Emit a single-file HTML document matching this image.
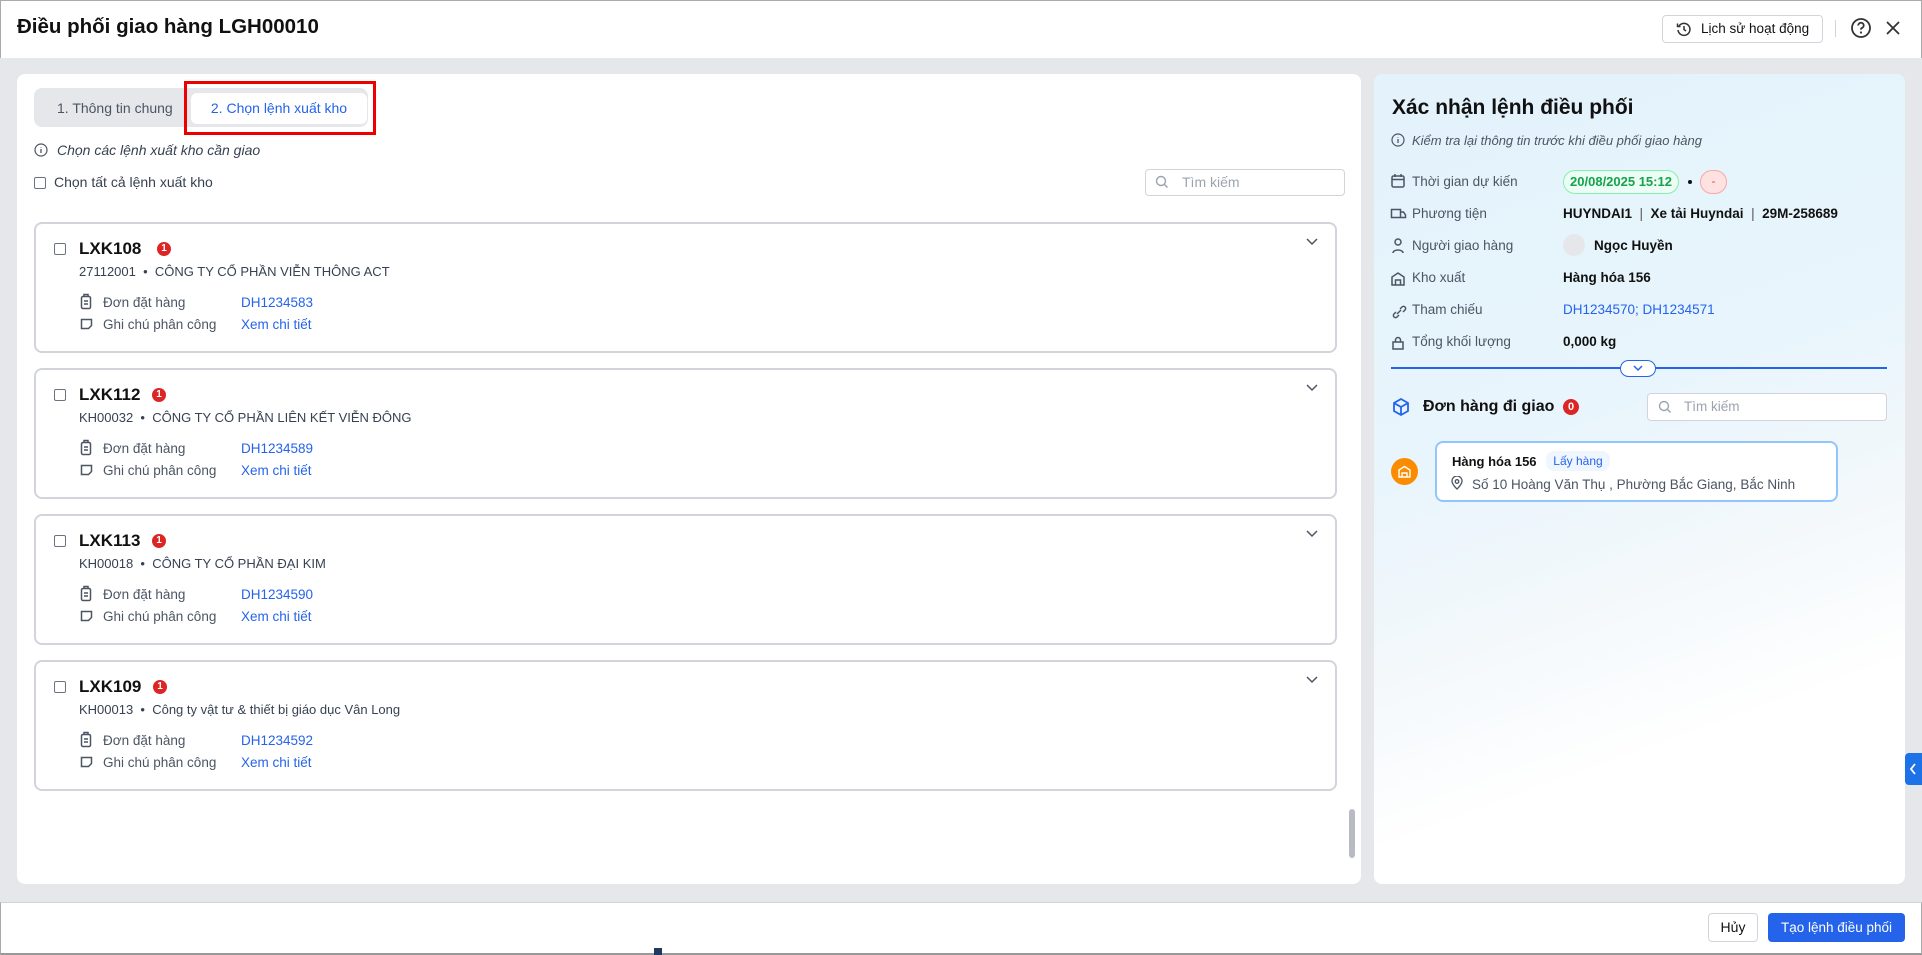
<!DOCTYPE html>
<html><head><meta charset="utf-8"><style>
*{box-sizing:border-box;margin:0;padding:0}
body{width:1922px;height:955px;overflow:hidden;background:#e5e7eb;font-family:"Liberation Sans","Noto Sans CJK SC",sans-serif;color:#1f2937;position:relative;font-size:14px}
.a{position:absolute}
.hdr{left:0;top:0;width:1922px;height:58px;background:#fff;border-top:1px solid #aaa;border-left:1px solid #aaa;border-right:1px solid #aaa}
.ftr{left:0;top:902px;width:1922px;height:53px;background:#fff;border-top:1px solid #d1d5db;border-left:1px solid #aaa;border-right:1px solid #aaa;border-bottom:2px solid #999}
.panel{background:#fff;border-radius:8px}
.card{left:34px;width:1303px;height:131px;border:2px solid #d1d5db;border-radius:8px;background:#fff}
.cb{width:12px;height:12px;border:1px solid #6b7280;border-radius:2px;background:#fff}
.lbl{color:#4b5563;font-size:13.5px}
.lnk{color:#2563eb;font-size:13.5px}
.sub{left:79px;font-size:13px;color:#374151}
.badge{width:14px;height:14px;border-radius:50%;background:#dc2626;color:#fff;font-size:10px;font-weight:bold;text-align:center;line-height:14px}
.rl{left:1412px;color:#4b5563;font-size:13.5px;line-height:16px}
.rv{left:1563px;font-weight:bold;font-size:13.5px;line-height:16px;color:#111}
.ic{stroke:#4b5563;fill:none;stroke-width:1.5}
</style></head><body>
<div class="a hdr"></div>
<div class="a" style="left:17px;top:15px;font-size:20.5px;font-weight:600;color:#111">Điều phối giao hàng LGH00010</div>
<div class="a" style="left:1662px;top:15px;width:161px;height:28px;border:1px solid #d1d5db;border-radius:4px;font-size:13.5px;line-height:26px;padding-left:38px;color:#111">Lịch sử hoạt động</div>
<svg class="a" style="left:1676px;top:21px" width="16" height="16" viewBox="0 0 16 16"><path d="M3 5a6 6 0 1 1-1 4" stroke="#333" stroke-width="1.5" fill="none"/><path d="M1.5 2.5v3h3" stroke="#333" stroke-width="1.5" fill="none"/><path d="M8 5v3.5l2 1.5" stroke="#333" stroke-width="1.5" fill="none"/></svg>
<div class="a" style="left:1835px;top:20px;width:1px;height:17px;background:#d1d5db"></div>
<svg class="a" style="left:1850px;top:17px" width="22" height="22" viewBox="0 0 22 22"><circle cx="11" cy="11" r="9" stroke="#333" stroke-width="1.8" fill="none"/><path d="M8.3 8.5a2.7 2.7 0 1 1 3.6 2.5c-.7.3-.9.8-.9 1.6" stroke="#333" stroke-width="1.8" fill="none"/><circle cx="11" cy="15.5" r="1.1" fill="#333"/></svg>
<svg class="a" style="left:1885px;top:20px" width="16" height="16" viewBox="0 0 16 16"><path d="M2 2l12 12M14 2L2 14" stroke="#333" stroke-width="1.8"/></svg>

<div class="a panel" style="left:17px;top:74px;width:1344px;height:810px"></div>
<div class="a" style="left:34px;top:88px;width:334px;height:39px;background:#e5e7eb;border-radius:8px"></div>
<div class="a" style="left:57px;top:100px;font-size:14px;color:#4b5563">1. Thông tin chung</div>
<div class="a" style="left:191px;top:93px;width:176px;height:31px;background:#fff;border-radius:6px;color:#2563eb;font-size:14px;line-height:31px;text-align:center">2. Chọn lệnh xuất kho</div>
<div class="a" style="left:184px;top:81px;width:192px;height:54px;border:3px solid #e00"></div>
<svg class="a" style="left:34px;top:143px" width="14" height="14" viewBox="0 0 14 14"><circle cx="7" cy="7" r="6" stroke="#4b5563" stroke-width="1.2" fill="none"/><path d="M7 6v4M7 4v.5" stroke="#4b5563" stroke-width="1.3"/></svg>
<div class="a" style="left:57px;top:142px;font-size:14px;font-style:italic;color:#374151">Chọn các lệnh xuất kho cần giao</div>
<div class="a cb" style="left:34px;top:177px"></div>
<div class="a" style="left:54px;top:174px;font-size:14px;color:#374151">Chọn tất cả lệnh xuất kho</div>
<div class="a" style="left:1145px;top:169px;width:200px;height:27px;border:1px solid #d1d5db;border-radius:4px;color:#9ca3af;font-size:14px;line-height:25px;padding-left:36px">Tìm kiếm</div>
<svg class="a" style="left:1155px;top:175px" width="14" height="14" viewBox="0 0 14 14"><circle cx="6" cy="6" r="4.5" stroke="#9ca3af" stroke-width="1.4" fill="none"/><path d="M9.5 9.5l3 3" stroke="#9ca3af" stroke-width="1.4"/></svg>

<div class="a card" style="top:222px"></div>
<div class="a card" style="top:368px"></div>
<div class="a card" style="top:514px"></div>
<div class="a card" style="top:660px"></div>

<div class="a cb" style="left:54px;top:243px"></div><div class="a" style="left:79px;top:239px;font-size:17px;font-weight:bold;color:#111">LXK108</div><div class="a badge" style="left:157px;top:242px">1</div>
<div class="a sub" style="top:264px">27112001 &nbsp;•&nbsp; CÔNG TY CỔ PHẦN VIỄN THÔNG ACT</div>
<div class="a lbl" style="left:103px;top:295px">Đơn đặt hàng</div><div class="a lnk" style="left:241px;top:295px">DH1234583</div>
<div class="a lbl" style="left:103px;top:317px">Ghi chú phân công</div><div class="a lnk" style="left:241px;top:317px">Xem chi tiết</div>

<div class="a cb" style="left:54px;top:389px"></div><div class="a" style="left:79px;top:385px;font-size:17px;font-weight:bold;color:#111">LXK112</div><div class="a badge" style="left:152px;top:388px">1</div>
<div class="a sub" style="top:410px">KH00032 &nbsp;•&nbsp; CÔNG TY CỔ PHẦN LIÊN KẾT VIỄN ĐÔNG</div>
<div class="a lbl" style="left:103px;top:441px">Đơn đặt hàng</div><div class="a lnk" style="left:241px;top:441px">DH1234589</div>
<div class="a lbl" style="left:103px;top:463px">Ghi chú phân công</div><div class="a lnk" style="left:241px;top:463px">Xem chi tiết</div>

<div class="a cb" style="left:54px;top:535px"></div><div class="a" style="left:79px;top:531px;font-size:17px;font-weight:bold;color:#111">LXK113</div><div class="a badge" style="left:152px;top:534px">1</div>
<div class="a sub" style="top:556px">KH00018 &nbsp;•&nbsp; CÔNG TY CỔ PHẦN ĐẠI KIM</div>
<div class="a lbl" style="left:103px;top:587px">Đơn đặt hàng</div><div class="a lnk" style="left:241px;top:587px">DH1234590</div>
<div class="a lbl" style="left:103px;top:609px">Ghi chú phân công</div><div class="a lnk" style="left:241px;top:609px">Xem chi tiết</div>

<div class="a cb" style="left:54px;top:681px"></div><div class="a" style="left:79px;top:677px;font-size:17px;font-weight:bold;color:#111">LXK109</div><div class="a badge" style="left:153px;top:680px">1</div>
<div class="a sub" style="top:702px">KH00013 &nbsp;•&nbsp; Công ty vật tư &amp; thiết bị giáo dục Vân Long</div>
<div class="a lbl" style="left:103px;top:733px">Đơn đặt hàng</div><div class="a lnk" style="left:241px;top:733px">DH1234592</div>
<div class="a lbl" style="left:103px;top:755px">Ghi chú phân công</div><div class="a lnk" style="left:241px;top:755px">Xem chi tiết</div>

<svg class="a" style="left:0;top:0" width="1361" height="884">
<g id="ci">
<rect x="81.5" y="296.5" width="9" height="12" rx="1.5" class="ic" stroke-width="1.3"/><path d="M84 296v-1.5h4v1.5M84 301h4M84 304h4" class="ic" stroke-width="1.3"/>
<path d="M81.5 319.5h10v6l-3 3h-7z" class="ic" stroke-width="1.3"/>
<path d="M1307 239l5 5 5-5" class="ic" stroke-width="1.4"/>
</g>
<use href="#ci" y="146"/><use href="#ci" y="292"/><use href="#ci" y="438"/>
</svg>
<div class="a" style="left:1349px;top:809px;width:6px;height:49px;background:#b8bcc2;border-radius:3px"></div>

<div class="a panel" style="left:1374px;top:74px;width:531px;height:810px;background:linear-gradient(160deg,#e3f2fb 0%,#e8f5fc 40%,#f3f8fb 60%,#fff 78%)"></div>
<div class="a" style="left:1392px;top:96px;font-size:21px;font-weight:600;color:#111">Xác nhận lệnh điều phối</div>
<svg class="a" style="left:1391px;top:133px" width="14" height="14" viewBox="0 0 14 14"><circle cx="7" cy="7" r="6" stroke="#4b5563" stroke-width="1.2" fill="none"/><path d="M7 6v4M7 4v.5" stroke="#4b5563" stroke-width="1.3"/></svg>
<div class="a" style="left:1412px;top:133px;font-size:13px;font-style:italic;color:#4b5563">Kiểm tra lại thông tin trước khi điều phối giao hàng</div>

<div class="a rl" style="top:174px">Thời gian dự kiến</div>
<div class="a rl" style="top:206px">Phương tiện</div>
<div class="a rl" style="top:238px">Người giao hàng</div>
<div class="a rl" style="top:270px">Kho xuất</div>
<div class="a rl" style="top:302px">Tham chiếu</div>
<div class="a rl" style="top:334px">Tổng khối lượng</div>
<svg class="a" style="left:1390px;top:170px" width="18" height="190">
<rect x="2" y="6" width="12" height="11" rx="1.5" class="ic" stroke-width="1.3"/><path d="M2 9.5h12M5 4v3M11 4v3" class="ic" stroke-width="1.3"/>
<path d="M1.5 39.5h9v8h-9zM10.5 42h3l2 3v2.5h-5" class="ic" stroke-width="1.3"/>
<circle cx="8" cy="72" r="3" class="ic" stroke-width="1.3"/><path d="M3 83c0-4 10-4 10 0" class="ic" stroke-width="1.3"/>
<path d="M2 115v-8l6-4 6 4v8zM5.5 115v-5h5v5" class="ic" stroke-width="1.3"/>
<path d="M6 142l-2 2a2 2 0 0 0 3 3l2-2M10 139l2-2a2 2 0 0 1 3 3l-2 2M7 144l4-4" class="ic" stroke-width="1.3"/>
<path d="M3 179v-7h10v7zM5.5 172v-2a2.5 2.5 0 0 1 5 0v2" class="ic" stroke-width="1.3"/>
</svg>
<div class="a" style="left:1563px;top:170px;width:116px;height:24px;border:1px solid #86efac;background:#ecfdf5;border-radius:12px;color:#16a34a;font-weight:600;font-size:13px;line-height:22px;text-align:center">20/08/2025 15:12</div>
<div class="a" style="left:1688px;top:180px;width:4px;height:4px;border-radius:2px;background:#111"></div>
<div class="a" style="left:1700px;top:170px;width:27px;height:24px;border:1px solid #fca5a5;background:#fee2e2;border-radius:12px;color:#ef4444;font-size:12px;line-height:21px;text-align:center">-</div>
<div class="a rv" style="top:206px">HUYNDAI1 <span style="color:#555;font-weight:normal">&nbsp;|&nbsp;</span> Xe tải Huyndai <span style="color:#555;font-weight:normal">&nbsp;|&nbsp;</span> 29M-258689</div>
<div class="a" style="left:1563px;top:234px;width:22px;height:22px;border-radius:50%;background:#e5e7eb"></div>
<div class="a rv" style="left:1594px;top:238px">Ngọc Huyền</div>
<div class="a rv" style="top:270px">Hàng hóa 156</div>
<div class="a rv" style="top:302px;color:#2563eb;font-weight:normal">DH1234570; DH1234571</div>
<div class="a rv" style="top:334px">0,000 kg</div>
<div class="a" style="left:1391px;top:367px;width:496px;height:1.5px;background:#2563eb"></div>
<div class="a" style="left:1620px;top:360px;width:36px;height:17px;border:1.5px solid #2563eb;border-radius:9px;background:#fff"></div>
<svg class="a" style="left:1632px;top:364px" width="12" height="8"><path d="M2 2l4 4 4-4" stroke="#2563eb" stroke-width="1.5" fill="none"/></svg>
<svg class="a" style="left:1391px;top:397px" width="20" height="20" viewBox="0 0 20 20"><path d="M10 2l7 4v8l-7 4-7-4V6zM3 6l7 4 7-4M10 10v8" stroke="#2563eb" stroke-width="1.8" fill="none"/></svg>
<div class="a" style="left:1423px;top:398px;font-size:16px;font-weight:600;color:#111">Đơn hàng đi giao</div>
<div class="a" style="left:1563px;top:399px;width:16px;height:16px;border-radius:50%;background:#dc2626;color:#fff;font-size:11px;font-weight:bold;text-align:center;line-height:16px">0</div>
<div class="a" style="left:1647px;top:393px;width:240px;height:28px;border:1px solid #d1d5db;border-radius:4px;background:#fff;color:#9ca3af;font-size:13.5px;line-height:26px;padding-left:36px">Tìm kiếm</div>
<svg class="a" style="left:1658px;top:400px" width="14" height="14" viewBox="0 0 14 14"><circle cx="6" cy="6" r="4.5" stroke="#9ca3af" stroke-width="1.4" fill="none"/><path d="M9.5 9.5l3 3" stroke="#9ca3af" stroke-width="1.4"/></svg>
<div class="a" style="left:1391px;top:458px;width:27px;height:27px;border-radius:50%;background:#fb8c00"></div>
<svg class="a" style="left:1397px;top:464px" width="15" height="15" viewBox="0 0 15 15"><path d="M2 13V6l5.5-3.5L13 6v7zM5 13V9h5v4" stroke="#fff" stroke-width="1.4" fill="none"/></svg>
<div class="a" style="left:1435px;top:441px;width:403px;height:61px;border:2px solid #93c5fd;border-radius:8px;background:#fff"></div>
<div class="a" style="left:1452px;top:454px;font-size:13px;font-weight:600;color:#111">Hàng hóa 156</div>
<div class="a" style="left:1546px;top:451px;width:64px;height:20px;border-radius:8px;background:#eff6ff;color:#2563eb;font-size:12px;line-height:20px;text-align:center">Lấy hàng</div>
<svg class="a" style="left:1450px;top:476px" width="14" height="14" viewBox="0 0 14 14"><path d="M7 13s-5-4.5-5-8a5 5 0 0 1 10 0c0 3.5-5 8-5 8z" stroke="#4b5563" stroke-width="1.3" fill="none"/><circle cx="7" cy="5.5" r="1.8" stroke="#4b5563" stroke-width="1.3" fill="none"/></svg>
<div class="a" style="left:1472px;top:477px;font-size:13.5px;color:#4b5563">Số 10 Hoàng Văn Thụ , Phường Bắc Giang, Bắc Ninh</div>
<div class="a" style="left:1905px;top:753px;width:17px;height:32px;background:#1d72e8;border-radius:4px 0 0 4px"></div>
<svg class="a" style="left:1909px;top:763px" width="8" height="12"><path d="M6 1L2 6l4 5" stroke="#fff" stroke-width="1.8" fill="none"/></svg>

<div class="a ftr"></div>
<div class="a" style="left:1708px;top:913px;width:50px;height:29px;border:1px solid #d1d5db;border-radius:4px;background:#fff;font-size:14px;line-height:27px;text-align:center;color:#111">Hủy</div>
<div class="a" style="left:1768px;top:913px;width:137px;height:29px;border-radius:4px;background:#2563eb;color:#fff;font-size:13.5px;line-height:29px;text-align:center">Tạo lệnh điều phối</div>
<div class="a" style="left:654px;top:948px;width:8px;height:7px;background:#1e3a5f"></div>
</body></html>
